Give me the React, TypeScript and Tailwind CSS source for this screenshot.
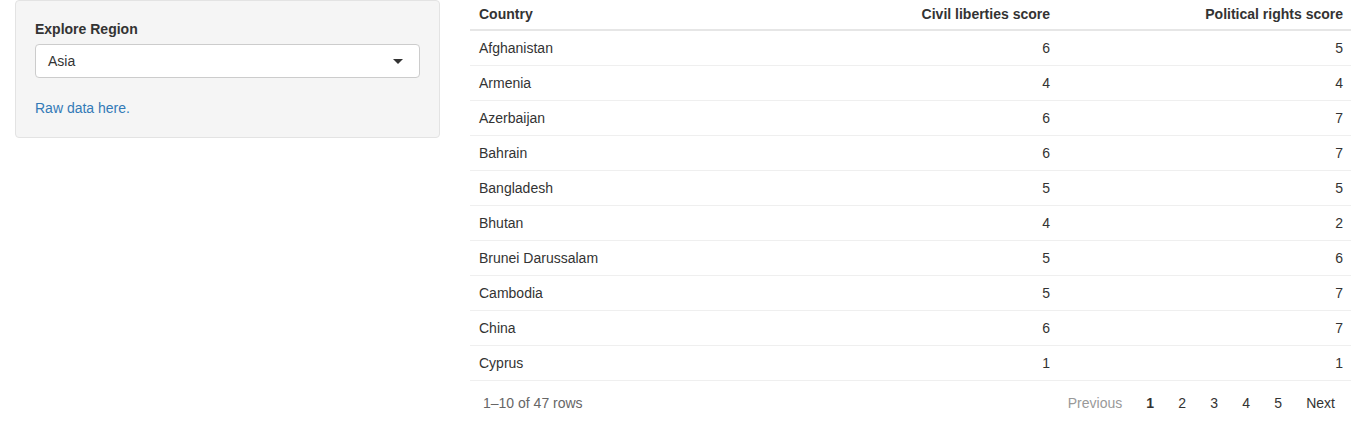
import React from "react";

const rows: [string, number, number][] = [
  ["Afghanistan", 6, 5],
  ["Armenia", 4, 4],
  ["Azerbaijan", 6, 7],
  ["Bahrain", 6, 7],
  ["Bangladesh", 5, 5],
  ["Bhutan", 4, 2],
  ["Brunei Darussalam", 5, 6],
  ["Cambodia", 5, 7],
  ["China", 6, 7],
  ["Cyprus", 1, 1],
];

function App() {
  return (
    <div className="flex pl-[15px] pr-[13px] text-[14px] leading-[20px] text-[#333] font-['Liberation_Sans',Arial,sans-serif]">
      <div className="w-[425px] shrink-0">
        <div className="bg-[#f5f5f5] border border-[#e3e3e3] rounded-[4px] px-[19px] pt-[18px] pb-[19px]">
          <div className="font-bold mb-[5px]">Explore Region</div>
          <div className="h-[34px] border border-[#ccc] rounded-[4px] bg-white flex items-center justify-between pl-[12px] pr-[16px]">
            <span>Asia</span>
            <span className="w-0 h-0 border-l-[5px] border-r-[5px] border-t-[5px] border-l-transparent border-r-transparent border-t-[#333]" />
          </div>
          <div className="mt-[20px]">
            <a href="#" className="text-[#337ab7]">
              Raw data here.
            </a>
          </div>
        </div>
      </div>
      <div className="ml-[30px] flex-1">
        <div className="flex flex-col">
          <div className="flex h-[31px] items-center pb-[2px] border-b-2 border-[#e6e6e6] font-bold">
            <div className="flex-1 px-[9px]">Country</div>
            <div className="w-[291px] px-[9px] text-right">Civil liberties score</div>
            <div className="w-[292px] px-[8px] text-right">Political rights score</div>
          </div>
          {rows.map(([name, civil, political]) => (
            <div key={name} className="flex h-[35px] items-center border-b border-[#efefef]">
              <div className="flex-1 px-[9px]">{name}</div>
              <div className="w-[291px] px-[9px] text-right">{civil}</div>
              <div className="w-[292px] px-[8px] text-right">{political}</div>
            </div>
          ))}
          <div className="flex items-center justify-between h-[43px] pl-[13px] pr-[16px]">
            <span className="text-[#666]">1–10 of 47 rows</span>
            <div className="flex items-center">
              <span className="text-[#999] mr-[12px]">Previous</span>
              {[1, 2, 3, 4, 5].map((n) => (
                <span
                  key={n}
                  className={
                    n === 1
                      ? "w-[32px] text-center font-bold"
                      : "w-[32px] text-center"
                  }
                >
                  {n}
                </span>
              ))}
              <span className="ml-[12px]">Next</span>
            </div>
          </div>
        </div>
      </div>
    </div>
  );
}

export default App;
